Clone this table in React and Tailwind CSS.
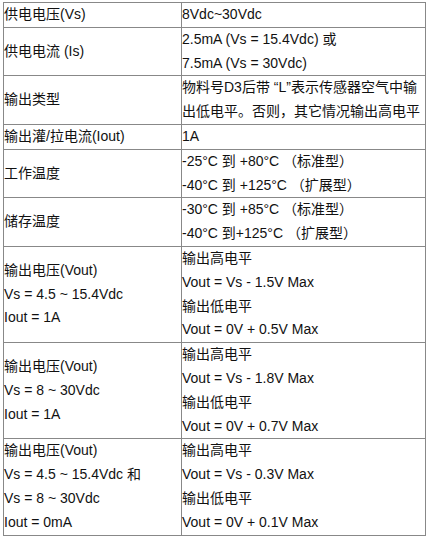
const rows = [
  { left: ['供电电压(Vs)'], right: ['8Vdc~30Vdc'] },
  { left: ['供电电流 (Is)'], right: ['2.5mA (Vs = 15.4Vdc) 或', '7.5mA (Vs = 30Vdc)'] },
  { left: ['输出类型'], right: ['物料号D3后带 “L”表示传感器空气中输', '出低电平。否则，其它情况输出高电平'] },
  { left: ['输出灌/拉电流(Iout)'], right: ['1A'] },
  { left: ['工作温度'], right: ['-25°C 到 +80°C （标准型）', '-40°C 到 +125°C （扩展型）'] },
  { left: ['储存温度'], right: ['-30°C 到 +85°C （标准型）', '-40°C 到+125°C （扩展型）'] },
  {
    left: ['输出电压(Vout)', 'Vs = 4.5 ~ 15.4Vdc', 'Iout = 1A'],
    right: ['输出高电平', 'Vout = Vs - 1.5V Max', '输出低电平', 'Vout = 0V + 0.5V Max'],
  },
  {
    left: ['输出电压(Vout)', 'Vs = 8 ~ 30Vdc', 'Iout = 1A'],
    right: ['输出高电平', 'Vout = Vs - 1.8V Max', '输出低电平', 'Vout = 0V + 0.7V Max'],
  },
  {
    left: ['输出电压(Vout)', 'Vs = 4.5 ~ 15.4Vdc 和', 'Vs = 8 ~ 30Vdc', 'Iout = 0mA'],
    right: ['输出高电平', 'Vout = Vs - 0.3V Max', '输出低电平', 'Vout = 0V + 0.1V Max'],
  },
];

export default function App() {
  return (
    <div className="bg-white min-h-screen pt-[2px] pl-[3px] font-['Liberation_Sans','Noto_Sans_CJK_SC',sans-serif] text-[14px] leading-[1.7] text-[#111]">
      <table className="border-collapse w-[423px]">
        <tbody>
          {rows.map((r, i) => (
            <tr key={i}>
              <td className="border border-[#888] p-0 align-middle w-[178px]">
                {r.left.map((t, j) => <div key={j} className="whitespace-nowrap">{t}</div>)}
              </td>
              <td className="border border-[#888] p-0 align-middle">
                {r.right.map((t, j) => <div key={j} className="whitespace-nowrap">{t}</div>)}
              </td>
            </tr>
          ))}
        </tbody>
      </table>
    </div>
  );
}
